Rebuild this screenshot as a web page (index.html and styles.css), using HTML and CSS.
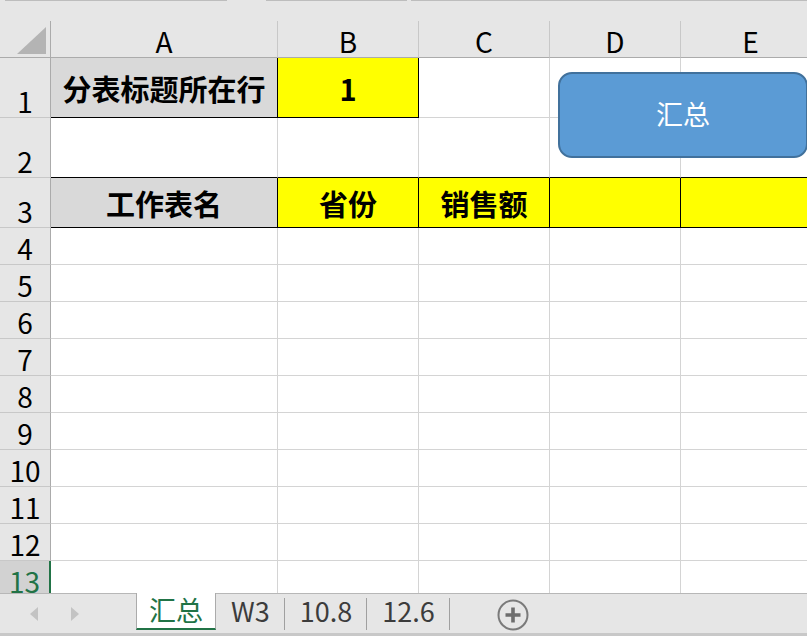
FILE: index.html
```html
<!DOCTYPE html>
<html lang="zh-CN">
<head>
<meta charset="utf-8">
<link rel="stylesheet" href="styles.css">
</head>
<body>
<div class="app">
  <div class="topstrip">
    <span class="seg seg1"></span>
    <span class="seg seg2"></span>
    <span class="seg seg3"></span>
  </div>
  <div class="sheet">
    <div class="grid">
      <div class="corner"><span class="tri"></span></div>
      <div class="h">A</div>
      <div class="h">B</div>
      <div class="h">C</div>
      <div class="h">D</div>
      <div class="h">E</div>

      <div class="r">1</div>
      <div class="c gray bold bk-r bk-b">分表标题所在行</div>
      <div class="c yel bold bk-r bk-b">1</div>
      <div class="c"></div>
      <div class="c"></div>
      <div class="c"></div>

      <div class="r">2</div>
      <div class="c bk-b"></div>
      <div class="c bk-b"></div>
      <div class="c bk-b"></div>
      <div class="c bk-b"></div>
      <div class="c bk-b"></div>

      <div class="r">3</div>
      <div class="c gray bold bk-r bk-b">工作表名</div>
      <div class="c yel bold bk-r bk-b">省份</div>
      <div class="c yel bold bk-r bk-b">销售额</div>
      <div class="c yel bk-r bk-b"></div>
      <div class="c yel bk-r bk-b"></div>

      <div class="r">4</div><div class="c"></div><div class="c"></div><div class="c"></div><div class="c"></div><div class="c"></div>
      <div class="r">5</div><div class="c"></div><div class="c"></div><div class="c"></div><div class="c"></div><div class="c"></div>
      <div class="r">6</div><div class="c"></div><div class="c"></div><div class="c"></div><div class="c"></div><div class="c"></div>
      <div class="r">7</div><div class="c"></div><div class="c"></div><div class="c"></div><div class="c"></div><div class="c"></div>
      <div class="r">8</div><div class="c"></div><div class="c"></div><div class="c"></div><div class="c"></div><div class="c"></div>
      <div class="r">9</div><div class="c"></div><div class="c"></div><div class="c"></div><div class="c"></div><div class="c"></div>
      <div class="r">10</div><div class="c"></div><div class="c"></div><div class="c"></div><div class="c"></div><div class="c"></div>
      <div class="r">11</div><div class="c"></div><div class="c"></div><div class="c"></div><div class="c"></div><div class="c"></div>
      <div class="r">12</div><div class="c"></div><div class="c"></div><div class="c"></div><div class="c"></div><div class="c"></div>
      <div class="r sel">13</div><div class="c"></div><div class="c"></div><div class="c"></div><div class="c"></div><div class="c"></div>
    </div>
    <div class="btn">汇总</div>
  </div>
  <div class="tabs">
    <div class="nav">
      <span class="arrow left"></span>
      <span class="arrow right"></span>
    </div>
    <div class="tab active">汇总</div>
    <div class="tab sep">W3</div>
    <div class="tab sep">10.8</div>
    <div class="tab sep">12.6</div>
    <div class="add">
      <svg width="32" height="32" viewBox="0 0 32 32">
        <circle cx="16" cy="16" r="14.5" fill="none" stroke="#7a7a7a" stroke-width="2"/>
        <path d="M16 8.5V23.5M8.5 16H23.5" stroke="#6d6d6d" stroke-width="3.6" fill="none"/>
      </svg>
    </div>
  </div>
</div>
</body>
</html>
```
FILE: styles.css
```css
html, body {
  margin: 0;
  padding: 0;
}
body {
  width: 807px;
  height: 636px;
  overflow: hidden;
  background: #e6e6e6;
  font-family: "Noto Sans CJK SC", "Noto Sans", sans-serif;
  color: #000;
}
.app {
  display: flex;
  flex-direction: column;
  width: 807px;
  height: 636px;
}
.topstrip {
  height: 21px;
  flex: none;
  background: #e6e6e6;
  display: flex;
  align-items: flex-start;
}
.seg {
  display: block;
  height: 1px;
  background: #bdbdbd;
}
.seg1 { margin-left: 5px; width: 222px; }
.seg2 { margin-left: 39px; width: 141px; }
.seg3 { margin-left: 4px; flex: 1; }

.sheet {
  position: relative;
  height: 572px;
  flex: none;
  overflow: hidden;
  background: #fff;
}
.grid {
  display: grid;
  grid-template-columns: 51px 227px 141px 131px 131px 140px;
  grid-template-rows: 37px 60px 60px 50px repeat(10, 37px);
  width: 820px;
}
.corner {
  background: #e6e6e6;
  border-right: 1px solid #ababab;
  border-bottom: 1px solid #ababab;
  display: flex;
  justify-content: flex-end;
  align-items: flex-end;
  padding: 0 4px 3px 0;
}
.tri {
  display: block;
  width: 29px;
  height: 27px;
  background: #b4b4b4;
  clip-path: polygon(100% 0, 100% 100%, 0 100%);
}
.h {
  background: #e6e6e6;
  border-right: 1px solid #c8c8c8;
  border-bottom: 1px solid #ababab;
  font-size: 28px;
  line-height: 1;
  display: flex;
  align-items: center;
  justify-content: center;
  padding-top: 3px;
}
.r {
  background: #e6e6e6;
  border-right: 1px solid #ababab;
  border-bottom: 1px solid #c8c8c8;
  font-size: 28px;
  line-height: 28px;
  display: flex;
  align-items: flex-end;
  justify-content: center;
  padding-bottom: 2px;
}
.r.sel {
  background: #d2d2d2;
  color: #217346;
  border-right: 2px solid #217346;
}
.c {
  border-right: 1px solid #d4d4d4;
  border-bottom: 1px solid #d4d4d4;
  display: flex;
  align-items: center;
  justify-content: center;
  font-size: 29px;
  line-height: 1;
  padding-top: 2px;
}
.bold { font-weight: bold; }
.gray { background: #d9d9d9; }
.yel { background: #ffff00; }
.bk-r { border-right-color: #000; }
.bk-b { border-bottom-color: #000; }

.btn {
  position: absolute;
  left: 558px;
  top: 51px;
  width: 250px;
  height: 86px;
  box-sizing: border-box;
  border: 2px solid #41719c;
  border-radius: 14px;
  background: #5b9bd5;
  color: #fff;
  font-size: 27px;
  line-height: 1;
  padding-bottom: 4px;
  display: flex;
  align-items: center;
  justify-content: center;
}

.tabs {
  flex: none;
  height: 43px;
  box-sizing: border-box;
  border-top: 1px solid #b7b7b7;
  border-bottom: 3px solid #c8c8c8;
  background: #e6e6e6;
  display: flex;
  align-items: flex-start;
}
.nav {
  width: 136px;
  height: 39px;
  position: relative;
  flex: none;
}
.arrow {
  position: absolute;
  top: 13px;
  width: 8px;
  height: 14px;
  background: #c3c3c3;
}
.arrow.left { left: 30px; clip-path: polygon(100% 0, 0 50%, 100% 100%); }
.arrow.right { left: 71px; clip-path: polygon(0 0, 100% 50%, 0 100%); }
.tab {
  height: 36px;
  box-sizing: border-box;
  padding: 0 15px 4px;
  font-size: 27px;
  line-height: 1;
  white-space: nowrap;
  color: #3c3c3c;
  display: flex;
  align-items: center;
  justify-content: center;
  position: relative;
  flex: none;
}
.tab.active {
  margin-top: -1px;
  height: 37px;
  padding: 0 12px 3px;
  background: #fff;
  color: #217346;
  border-left: 1px solid #ababab;
  border-right: 1px solid #ababab;
  border-bottom: 2px solid #217346;
}
.tab.sep::after {
  content: "";
  position: absolute;
  right: 0;
  top: 4px;
  width: 1px;
  height: 32px;
  background: #a0a0a0;
}
.add {
  margin-left: 47px;
  margin-top: 5px;
  width: 32px;
  height: 32px;
}
.add svg { display: block; }
```
